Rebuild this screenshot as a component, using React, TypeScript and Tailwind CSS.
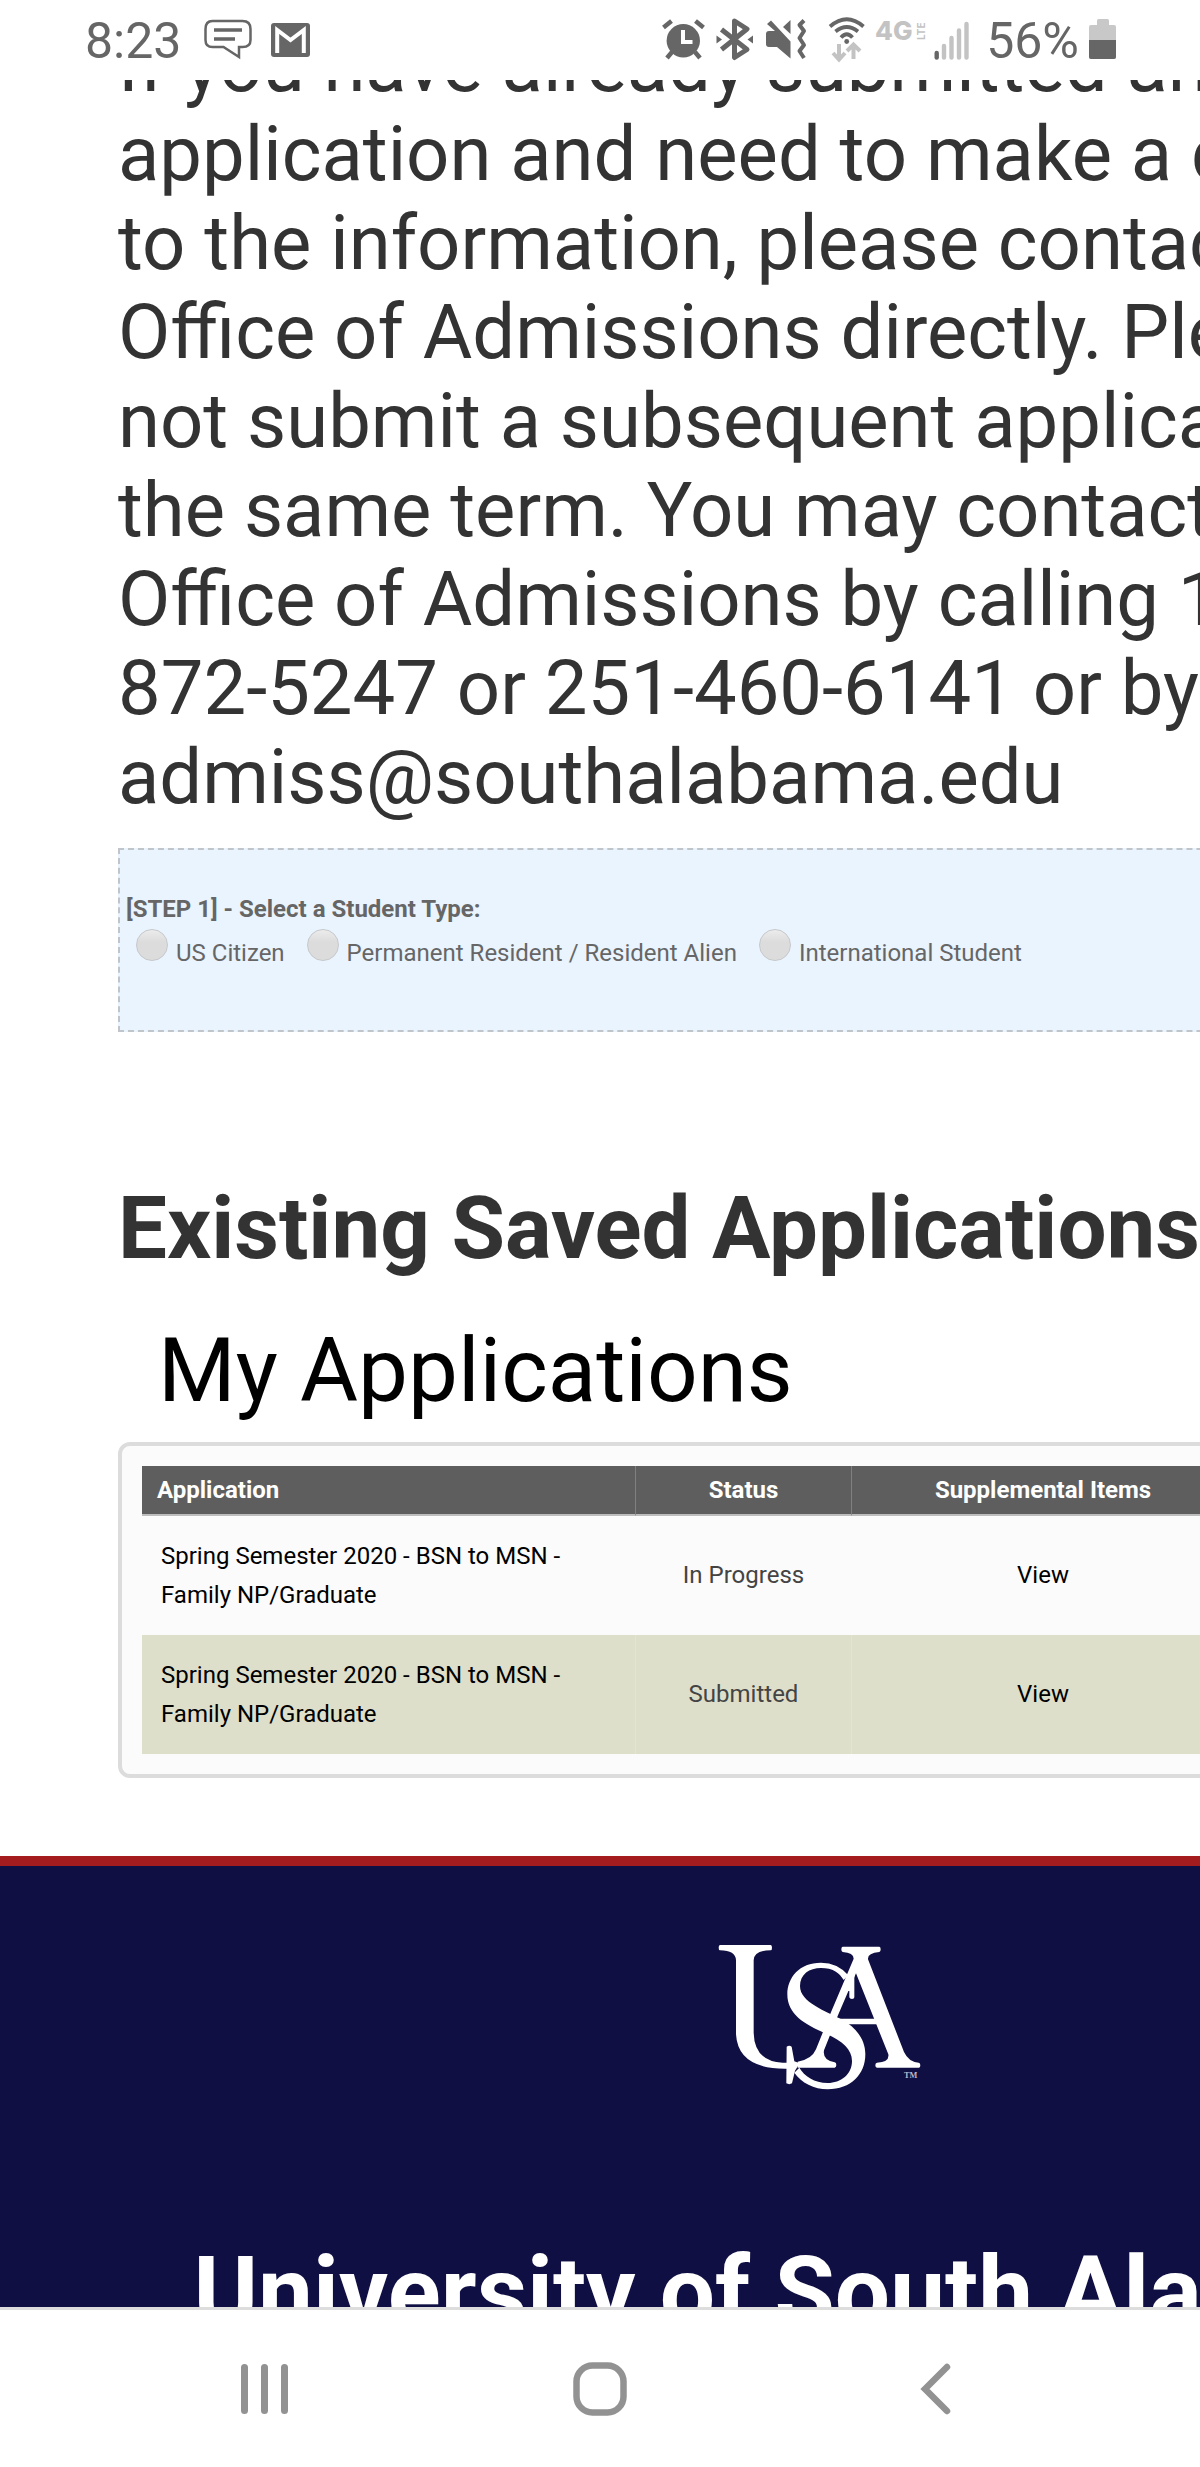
import { useState } from 'react';

const introLines = [
  'If you have already submitted an',
  'application and need to make a change',
  'to the information, please contact the',
  'Office of Admissions directly. Please do',
  'not submit a subsequent application for',
  'the same term. You may contact the',
  'Office of Admissions by calling 1-800-',
  '872-5247 or 251-460-6141 or by email',
  'admiss@southalabama.edu',
];

const studentTypes = ['US Citizen', 'Permanent Resident / Resident Alien', 'International Student'];

const applications = [
  { term: 'Spring Semester 2020 - BSN to MSN -', program: 'Family NP/Graduate', status: 'In Progress' },
  { term: 'Spring Semester 2020 - BSN to MSN -', program: 'Family NP/Graduate', status: 'Submitted' },
];

function SystemIcons() {
  return (
    <svg className="h-[60px] w-80" viewBox="0 0 320 60" fill="none" stroke="#666666" aria-hidden="true">
      {/* Alarm */}
      <circle cx="27.3" cy="30.7" r="16.7" fill="#666666" stroke="none" />
      <path d="M7.5 17.5l8-6.5M39.5 11l8 6.5M11 48l5-6M44 48l-5-6" strokeWidth="4.5" />
      <path d="M27 20v12h9.5" stroke="white" strokeWidth="4" />

      {/* Bluetooth */}
      <path d="M65.5 19.5L91 39.5l-12.5 8V11L91 19 65.5 39.5" strokeWidth="5" strokeLinejoin="round" />
      <path d="M60.5 25.5l5.5 4-5.5 4zM97 25.5l-5.5 4 5.5 4z" fill="#666666" stroke="none" />

      {/* Muted, vibrate */}
      <path d="M110 24q0-3 3-3h6L111 14l4-3.5 19.5 21v17L121 37h-8q-3 0-3-3zM134.5 10v14L127 17z" fill="#666666" stroke="none" />
      <path d="M148 10.5L143.5 15l4.5 6-4.500 7 4.5 7-4.5 6 4.5 7" strokeWidth="4" strokeLinejoin="round" />

      {/* Wi-Fi with traffic arrows */}
      <path d="M174 16.5Q190.7 2 207.5 16.5M179.5 21.5Q190.7 12.5 202 21.5M185 27.5Q190.7 21 196.5 27.5" strokeWidth="3.8" />
      <circle cx="190.7" cy="31.5" r="2.4" fill="#666666" stroke="none" />
      <path d="M183 34v15M177 43l6 6.5 6-6.5M197.5 49V35M191 41l6.5-6.5L204 41" stroke="#c3c3c3" strokeWidth="4" />

      {/* Network type */}
      <text x="219" y="30" fill="#c3c3c3" stroke="none" fontFamily="Inter, sans-serif" fontSize="26" fontWeight="800">4G</text>
      <text x="-30" y="269" transform="rotate(-90)" fill="#c3c3c3" stroke="none" fontFamily="Inter, sans-serif" fontSize="10" fontWeight="700">LTE</text>

      {/* Signal */}
      <path d="M280.7 43v4.5" strokeWidth="4.4" strokeLinecap="round" />
      <path d="M288 36v11.5M295.5 28v19.5M303 20.5v27M310.5 14v33.5" stroke="#c3c3c3" strokeWidth="4.4" strokeLinecap="round" />
    </svg>
  );
}

function StatusBar() {
  return (
    <header className="flex h-20 shrink-0 items-center justify-between bg-white pr-[84px] pl-[85px] text-[50px] leading-none text-[#666666]">
      <div className="flex items-center">
        <span className="w-[119px] pt-0.5">8:23</span>
        <svg className="h-[42px] w-12" viewBox="0 0 48 42" fill="none" stroke="currentColor" strokeWidth="2.5" aria-hidden="true">
          <path d="M8.5 2h30q8 0 8 8v11q0 7-8 7H35v10L19.5 28h-11q-7 0-7-7V10q0-8 7-8z" />
          <path d="M10 11h28M10 20h21" strokeWidth="3.5" />
        </svg>
        <svg className="ml-[19px] h-[34px] w-[39px]" viewBox="0 0 39 34" aria-hidden="true">
          <rect width="39" height="34" rx="3" fill="currentColor" />
          <path d="M6.2 30V7l13.3 10L32.8 7v23" fill="none" stroke="white" strokeWidth="4" />
        </svg>
      </div>
      <div className="flex items-center gap-2.5">
        <SystemIcons />
        <span className="pt-0.5">56%</span>
        <svg className="h-11 w-[27px]" viewBox="0 0 27 44" fill="#c8c8c8" aria-hidden="true">
          <rect x="8" y="1" width="12" height="8" rx="1.5" />
          <rect y="7" width="27" height="34" rx="2" />
          <path d="M0 22h27v17q0 2-2 2H2q-2 0-2-2z" fill="#666666" />
        </svg>
      </div>
    </header>
  );
}

function UsaLogo() {
  return (
    <svg className="h-[147px] w-[204px]" viewBox="106 134 612 441" fill="white" role="img" aria-label="USA">
      {/* U with its crossed tail */}
      <path d="M112 137h152q4 0 4 8t-4 8q-50 0-51 30v217q2 86 87 90h18v18q-152 4-158-103V183q-1-30-48-30-4 0-4-8t4-8z" />
      <path d="M312 442q8-5 15 0l8 44 16 6-14 22-9 38q-8 5-17 0z" />
      {/* A */}
      <path d="M480 142h110q4 0 4 8t-4 8q-36 3-34 22l108 278q14 30 44 32 5 0 5 8t-5 7H583q-5 0-5-7t5-8q38-2 34-25L520 222l-55 128-23 58-18 45q-5 30 32 36 5 1 5 8t-5 8H345v-18q42-6 55-37l20-50 23-57 70-165q0-18-33-20-4 0-4-8t4-8z" />
      <path d="M465 358h112l6 17H470zM515 222v72q0 5-7 5t-8-5v-19h-8l8-45z" />
      {/* S */}
      <path d="M497 228Q465 190 415 190C350 190 314 235 314 285c0 60 51 90 116 118 50 22 78 47 78 82 0 40-33 66-73 66-40 0-70-21-85-46l-15 15c20 30 60 50 100 50 70 0 113-45 113-105 0-45-28-80-68-103-50-27-128-52-128-102 0-35 28-54 63-54 35 0 55 14 68 36z" />
      <text x="664" y="537" fontFamily="Liberation Serif, serif" fontSize="25" fontWeight="700" fill="#b9b9cc">TM</text>
    </svg>
  );
}

function NavigationBar() {
  return (
    <nav className="grid h-40 shrink-0 grid-cols-3 border-t-[3px] border-[#dddddd] bg-white px-24 text-[#929292]">
      <button type="button" aria-label="Recent apps" className="flex items-center justify-center">
        <svg className="size-14" viewBox="0 0 56 56" fill="none" stroke="currentColor" strokeWidth="7" strokeLinecap="round">
          <path d="M8.5 6.5v43M28.500 6.5v43M48.5 6.5v43" />
        </svg>
      </button>
      <button type="button" aria-label="Home" className="flex items-center justify-center">
        <svg className="size-14" viewBox="0 0 56 56" fill="none" stroke="currentColor" strokeWidth="6.5">
          <rect x="4.5" y="4.5" width="47" height="47" rx="16" />
        </svg>
      </button>
      <button type="button" aria-label="Back" className="flex items-center justify-center">
        <svg className="size-14" viewBox="0 0 56 56" fill="none" stroke="currentColor" strokeWidth="6.5" strokeLinecap="round">
          <path d="M39 6L17 28l22 22" />
        </svg>
      </button>
    </nav>
  );
}

export default function App() {
  const [studentType, setStudentType] = useState('');

  return (
    <div className="flex h-screen flex-col overflow-hidden bg-white font-['Roboto',sans-serif]">
      <StatusBar />

      {/* The page is wider than the phone, so it runs off to the right */}
      <main className="min-h-0 flex-1 overflow-hidden">
        <div className="min-w-[1640px] whitespace-nowrap">
          <div className="-mt-[59px] px-[118px]">
            <p className="text-[76px] leading-[89px] text-[#333333]">
              {introLines.map((line) => (
                <span key={line} className="block">{line}</span>
              ))}
            </p>

            <fieldset className="mt-[26px] h-[184px] border-2 border-dashed border-[#c0c5ca] bg-[#eaf4fe] pt-[45px] pl-1.5 text-[24px] leading-7 text-[#666666]">
              <p className="font-bold">[STEP 1] - Select a Student Type:</p>
              <div className="mt-1.5 flex gap-[22px] pl-2.5">
                {studentTypes.map((type) => (
                  <label key={type} className="flex items-end gap-2">
                    <input
                      type="radio"
                      name="studentType"
                      value={type}
                      checked={studentType === type}
                      onChange={() => setStudentType(type)}
                      className="mb-1.5 size-8 appearance-none rounded-full border border-[#c6c8ca] bg-linear-to-b from-[#ececec] to-[#dcdcdc] to-40% checked:border-8"
                    />
                    {type}
                  </label>
                ))}
              </div>
            </fieldset>

            <h2 className="mt-[146px] text-[87px] leading-[100px] font-bold text-[#333333]">
              Existing Saved Applications
            </h2>
            <h3 className="mt-[43px] pl-10 text-[89px] leading-[100px] text-black">My Applications</h3>

            <div className="mt-[21px] rounded-xl border-4 border-[#dcdcdc] bg-[#fbfbfb] px-5 py-5">
              <table className="w-[1092px] table-fixed border-separate border-spacing-0 text-[24px] leading-[39px]">
                <thead>
                  <tr className="h-[50px] bg-[#5e5e5e] text-white">
                    <th className="w-[494px] border-r border-b-2 border-r-[#808080] border-b-[#bdbdbd] pl-[15px] text-left">Application</th>
                    <th className="w-[216px] border-r border-b-2 border-r-[#808080] border-b-[#bdbdbd]">Status</th>
                    <th className="border-b-2 border-b-[#bdbdbd]">Supplemental Items</th>
                  </tr>
                </thead>
                <tbody>
                  {applications.map((app) => (
                    <tr key={app.status} className="h-[119px] text-center text-[#444444] even:bg-[#dddfca]">
                      <td className="border-r border-white/20 pl-[19px] text-left text-black">
                        {app.term}
                        <br />
                        {app.program}
                      </td>
                      <td className="border-r border-white/20">{app.status}</td>
                      <td>
                        <a href="#supplemental" className="text-black">View</a>
                      </td>
                    </tr>
                  ))}
                </tbody>
              </table>
            </div>
          </div>

          <footer className="mt-[78px] flex flex-col items-center border-t-10 border-[#a51c1e] bg-[#0f0f43] pt-[78px] pb-20 text-white">
            <UsaLogo />
            <h2 className="mt-[142px] text-[98px] leading-[120px] font-bold">University of South Alabama</h2>
          </footer>
        </div>
      </main>

      <NavigationBar />
    </div>
  );
}
